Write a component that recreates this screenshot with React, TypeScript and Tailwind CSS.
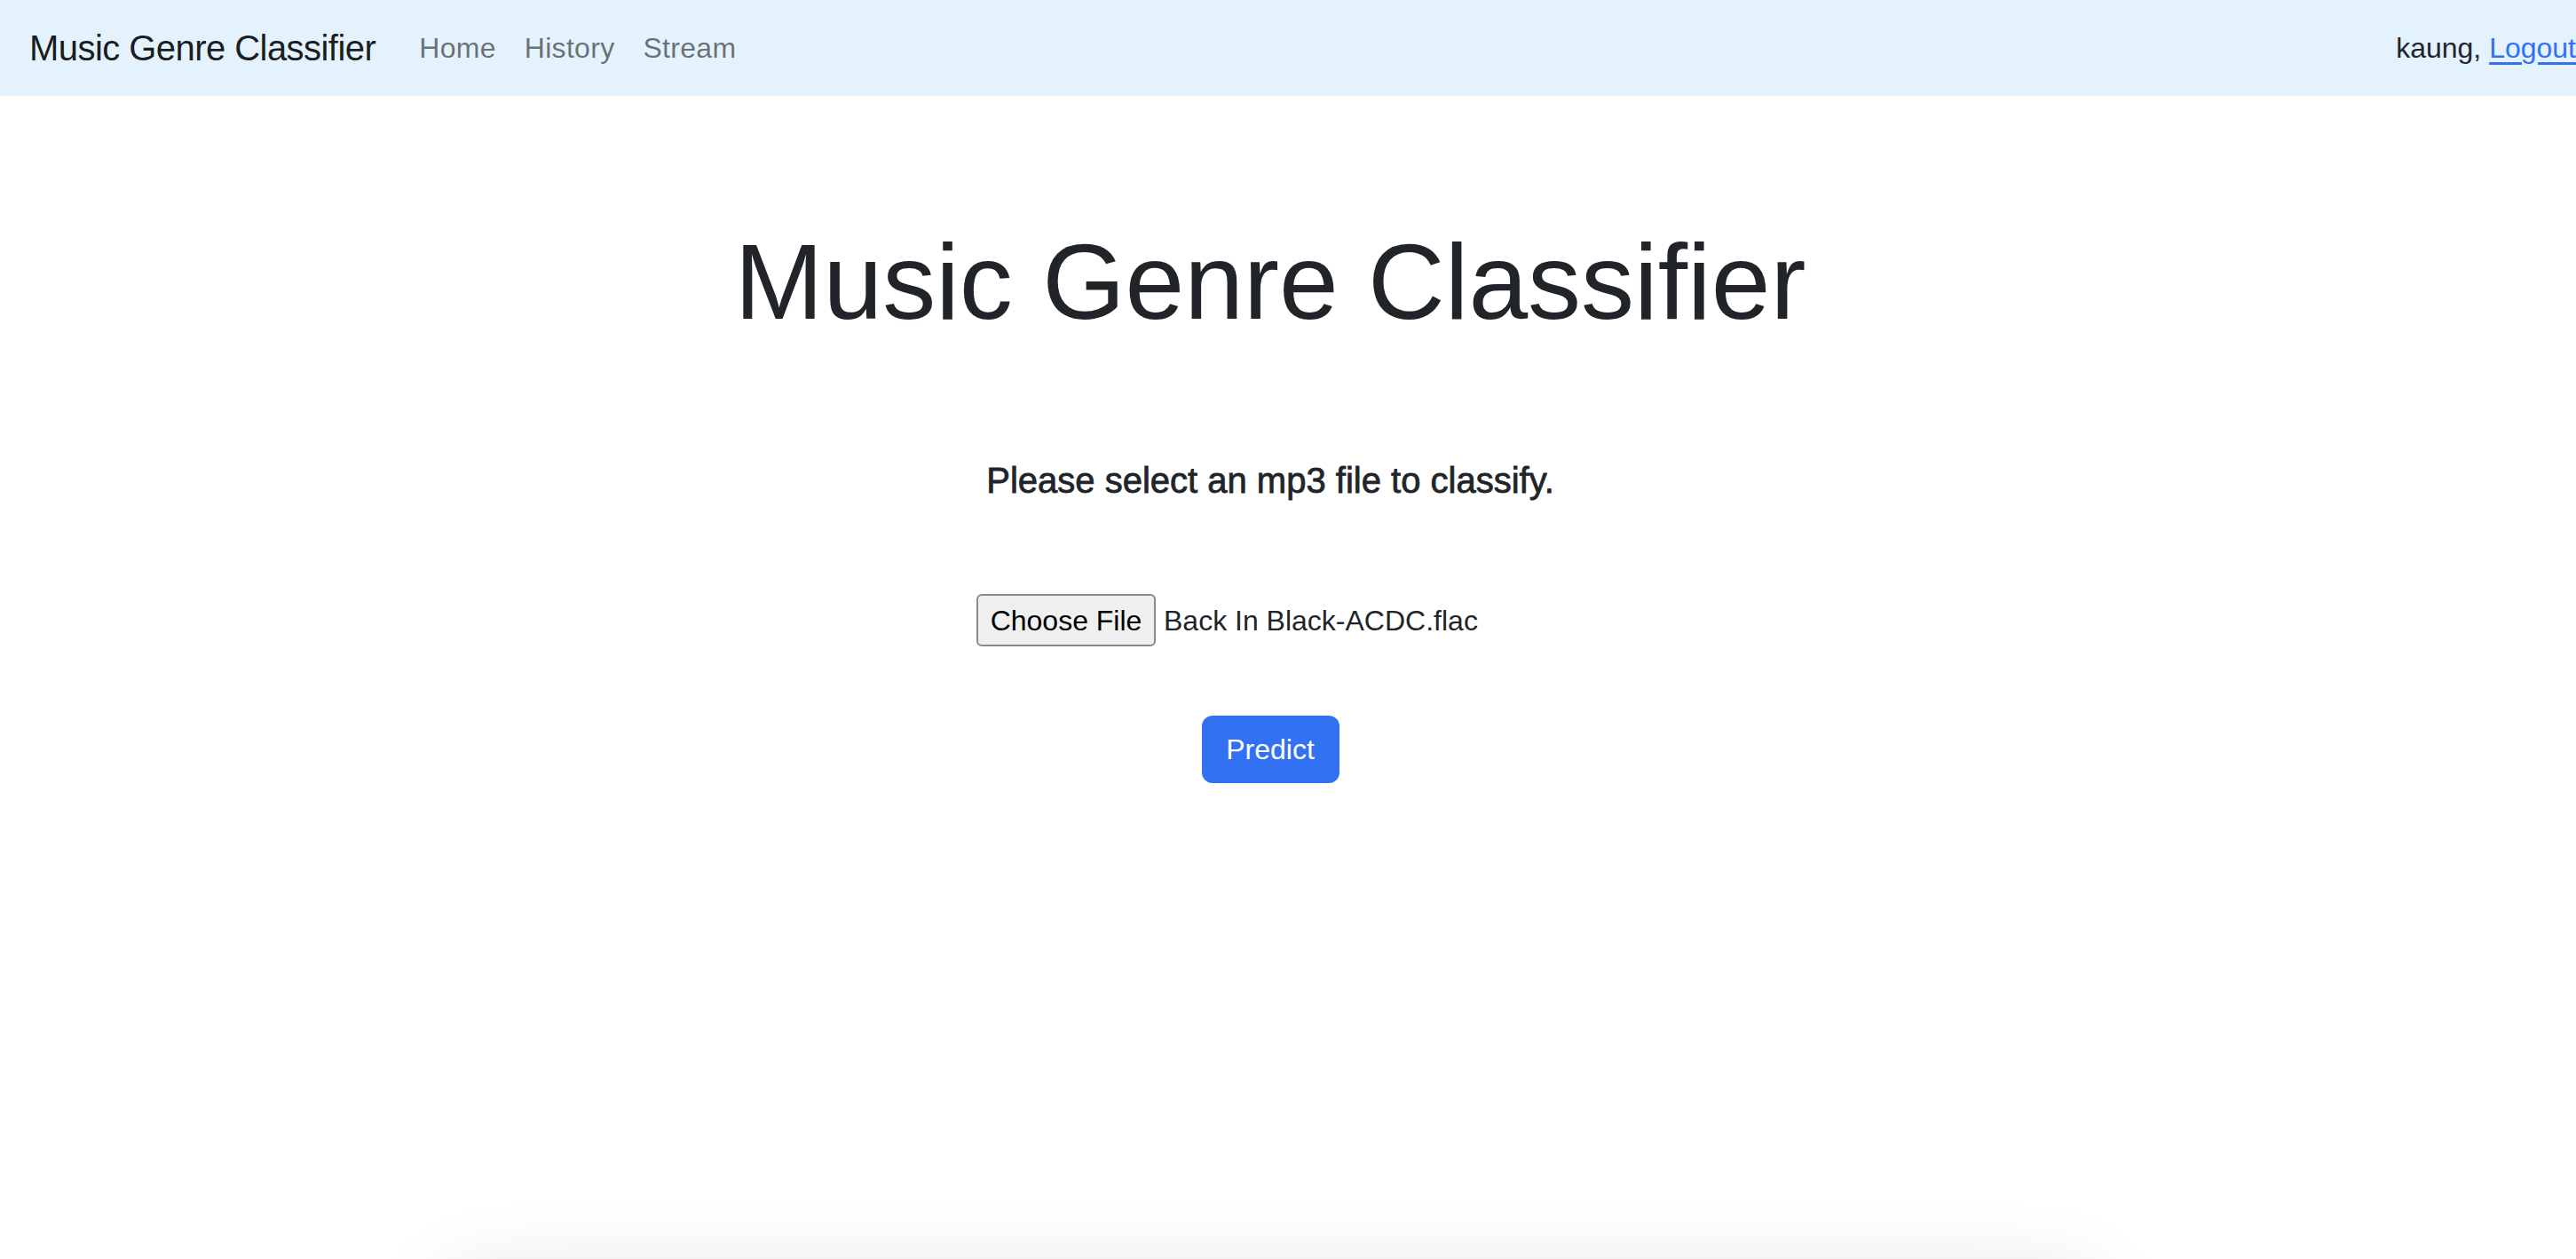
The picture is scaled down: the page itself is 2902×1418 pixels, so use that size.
export default function App() {
  return (
    <div className="min-h-screen overflow-hidden bg-white text-[#212529] font-['Liberation_Sans',Arial,sans-serif]">
      {/* Navbar */}
      <nav className="flex h-[108px] items-center justify-between bg-[#e3f2fd] pl-[33px]">
        <div className="flex items-center">
          <a className="mr-[33px] text-[40px] leading-[60px] tracking-[-0.55px] text-[#000000e6]">Music Genre Classifier</a>
          <ul className="flex items-center">
            {['Home', 'History', 'Stream'].map((item) => (
              <li key={item} className="px-[16px] text-[32px] leading-[48px] tracking-[0.3px] text-[rgba(0,0,0,0.55)]">
                {item}
              </li>
            ))}
          </ul>
        </div>
        <div className="text-[32px] leading-[48px] whitespace-nowrap">
          kaung, <a className="text-[#3370f3] underline underline-offset-[5px]">Logout</a>
        </div>
      </nav>

      {/* Main */}
      <main className="flex flex-col items-center pr-[40px]">
        <h1 className="mt-[149px] text-[120px] leading-none">Music Genre Classifier</h1>
        <h5 className="mt-[144px] text-[40px] leading-none [-webkit-text-stroke:0.8px_#212529]">
          Please select an mp3 file to classify.
        </h5>
        <div className="mt-[108px] flex w-[662px] items-center">
          <span className="flex h-[59px] w-[202px] items-center justify-center rounded-[6px] border-2 border-[#8a8a8a] bg-[#efefef] text-[32px] text-black">
            Choose File
          </span>
          <span className="ml-[9px] text-[32px]">Back In Black-ACDC.flac</span>
        </div>
        <button className="mt-[78px] h-[76px] w-[155px] rounded-[12px] bg-[#3371f3] text-[32px] text-white">
          Predict
        </button>
        <div className="mt-[540px] h-[400px] w-[1840px] rounded-[12px] bg-white shadow-[0_32px_100px_rgba(0,0,0,0.2)]" />
      </main>
    </div>
  )
}
